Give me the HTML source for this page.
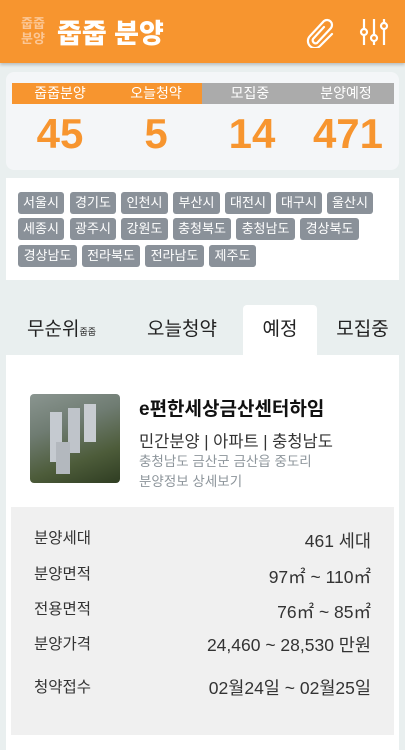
<!DOCTYPE html>
<html><head><meta charset="utf-8"><style>
*{margin:0;padding:0;box-sizing:border-box}
body{width:405px;height:750px;overflow:hidden;background:#e9efef;font-family:"Liberation Sans","Noto Sans CJK KR",sans-serif;position:relative}
.hdr{position:absolute;left:0;top:0;width:405px;height:63px;background:#f7952f;box-shadow:0 2px 3px rgba(0,0,0,.2)}
.logo{position:absolute;left:18px;top:16px;width:30px;height:30px;color:#fbc797;font-size:13px;font-weight:bold;line-height:15px;text-align:center;letter-spacing:0}
.title{position:absolute;left:57px;top:12px;color:#fff;font-size:27px;font-weight:900;letter-spacing:0}
.stats{position:absolute;left:6px;top:72px;width:393px;height:98px;background:#f4f6f8;border-radius:8px}
.bar{position:absolute;top:11px;height:21px;font-size:14px;line-height:21px;color:#fff}
.bar span{position:absolute;width:96px;text-align:center}
.num{position:absolute;top:38px;font-size:42px;font-weight:bold;color:#f7952f;width:96px;text-align:center}
.regions{position:absolute;left:6px;top:178px;width:393px;height:102px;background:#fff}
.tag{position:absolute;height:22px;background:#8a9199;color:#fff;font-size:13px;line-height:22px;border-radius:3px;text-align:center;white-space:nowrap}
.tab{position:absolute;top:305px;height:50px;font-size:19px;line-height:50px;text-align:center;color:#222}
.card{position:absolute;left:6px;top:355px;width:393px;height:395px;background:#fff}
.info{position:absolute;left:11px;top:507px;width:383px;height:228px;background:#f0f0f0}
.r{position:absolute;font-size:15.5px;color:#333}
.l{left:34px}.v{right:34px;text-align:right;font-size:17.5px}
</style></head><body>
<div class="hdr">
<div class="logo">줍줍<br>분양</div>
<div class="title">줍줍 분양</div>
<svg style="position:absolute;left:304px;top:18px" width="32" height="30" viewBox="0 0 32 30" fill="none" stroke="#fff" stroke-width="2.2" stroke-linecap="round"><path d="M20 9 L9 21 a3 3 0 0 0 4 4 L27 10 a5 5 0 0 0 -7 -7 L6 18 a7 7 0 0 0 10 10 L28 16"/></svg>
<svg style="position:absolute;left:359px;top:17px" width="30" height="30" viewBox="0 0 30 30" fill="none" stroke="#fff" stroke-width="2.2"><path d="M5 2v26M15 2v26M25 2v26"/><circle cx="5" cy="15" r="3" fill="#f7952f"/><circle cx="15" cy="21" r="3" fill="#f7952f"/><circle cx="25" cy="9" r="3" fill="#f7952f"/></svg>
</div>
<div class="stats">
<div class="bar" style="left:6px;width:196px;background:#f7952f"><span style="left:0">줍줍분양</span><span style="left:96px">오늘청약</span></div>
<div class="bar" style="left:196px;width:192px;background:#ababab"><span style="left:0">모집중</span><span style="left:96px">분양예정</span></div>
<div class="num" style="left:6px">45</div>
<div class="num" style="left:102px">5</div>
<div class="num" style="left:198px">14</div>
<div class="num" style="left:294px">471</div>
</div>
<div class="regions">
<div class="tag" style="left:12px;top:14px;width:46px">서울시</div>
<div class="tag" style="left:64px;top:14px;width:46px">경기도</div>
<div class="tag" style="left:115px;top:14px;width:47px">인천시</div>
<div class="tag" style="left:167px;top:14px;width:47px">부산시</div>
<div class="tag" style="left:219px;top:14px;width:46px">대전시</div>
<div class="tag" style="left:270px;top:14px;width:46px">대구시</div>
<div class="tag" style="left:321px;top:14px;width:46px">울산시</div>
<div class="tag" style="left:12px;top:40px;width:46px">세종시</div>
<div class="tag" style="left:64px;top:40px;width:46px">광주시</div>
<div class="tag" style="left:115px;top:40px;width:47px">강원도</div>
<div class="tag" style="left:167px;top:40px;width:58px">충청북도</div>
<div class="tag" style="left:230px;top:40px;width:59px">충청남도</div>
<div class="tag" style="left:294px;top:40px;width:59px">경상북도</div>
<div class="tag" style="left:12px;top:67px;width:59px">경상남도</div>
<div class="tag" style="left:76px;top:67px;width:58px">전라북도</div>
<div class="tag" style="left:139px;top:67px;width:59px">전라남도</div>
<div class="tag" style="left:203px;top:67px;width:47px">제주도</div>
</div>
<div class="tab" style="left:18px;width:100px;text-align:left;padding-left:9px">무순위<span style="font-size:9px">줍줍</span></div>
<div class="tab" style="left:130px;width:104px">오늘청약</div>
<div class="tab" style="left:243px;width:74px;background:#fff;border-radius:4px 4px 0 0">예정</div>
<div class="tab" style="left:320px;width:85px">모집중</div>
<div class="card"></div>
<div style="position:absolute;left:30px;top:394px;width:90px;height:89px;border-radius:4px;background:linear-gradient(160deg,#8a9590 0%,#6f7c72 35%,#4d5c3a 70%,#2f3d22 100%)">
<div style="position:absolute;left:20px;top:18px;width:12px;height:50px;background:#c5cad0"></div>
<div style="position:absolute;left:38px;top:14px;width:12px;height:45px;background:#bfc4ca"></div>
<div style="position:absolute;left:54px;top:10px;width:12px;height:38px;background:#c8ccd1"></div>
<div style="position:absolute;left:26px;top:48px;width:14px;height:32px;background:#b3b8be"></div>
</div>
<div style="position:absolute;left:139px;top:394px;font-size:19px;font-weight:bold;color:#111">e편한세상금산센터하임</div>
<div style="position:absolute;left:139px;top:428px;font-size:16.5px;color:#333">민간분양 | 아파트 | 충청남도</div>
<div style="position:absolute;left:139px;top:452px;font-size:13.5px;color:#8d959b;line-height:20px">충청남도 금산군 금산읍 중도리<br>분양정보 상세보기</div>
<div class="info"></div>
<div class="r l" style="top:526px">분양세대</div><div class="r v" style="top:528px">461 세대</div>
<div class="r l" style="top:562px">분양면적</div><div class="r v" style="top:564px">97㎡ ~ 110㎡</div>
<div class="r l" style="top:597px">전용면적</div><div class="r v" style="top:599px">76㎡ ~ 85㎡</div>
<div class="r l" style="top:632px">분양가격</div><div class="r v" style="top:632px">24,460 ~ 28,530 만원</div>
<div class="r l" style="top:675px">청약접수</div><div class="r v" style="top:675px">02월24일 ~ 02월25일</div>
</body></html>
